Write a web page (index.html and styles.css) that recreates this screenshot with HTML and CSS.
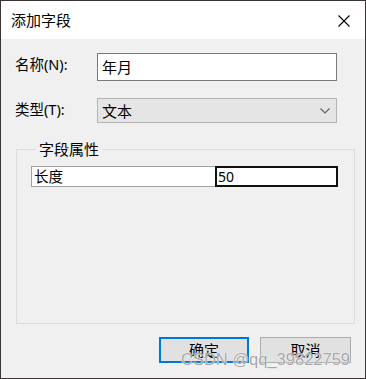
FILE: index.html
```html
<!DOCTYPE html>
<html lang="zh-CN">
<head>
  <meta charset="UTF-8" />
  <meta name="viewport" content="width=device-width, initial-scale=1.0" />
  <title>添加字段</title>
  <link rel="stylesheet" href="styles.css">
</head>
<body>

  <div class="window">
    <!-- Title bar -->
    <div class="titlebar">
      <span class="title">添加字段</span>
      <svg class="close" width="12" height="12" viewBox="0 0 12 12">
        <path d="M0.5 0.5 L11.5 11.5 M11.5 0.5 L0.5 11.5" stroke="#000" stroke-width="1.1" fill="none" />
      </svg>
    </div>

    <div class="content">
      <!-- Name / type rows -->
      <div class="row name-row">
        <label class="label">名称(N):</label>
        <div class="textbox">年月</div>
      </div>
      <div class="row type-row">
        <label class="label">类型(T):</label>
        <div class="combo">
          <span>文本</span>
          <svg class="chevron" width="10" height="6" viewBox="0 0 10 6">
            <path d="M0.5 0.5 L5 5 L9.5 0.5" stroke="#606060" stroke-width="1.1" fill="none" />
          </svg>
        </div>
      </div>

      <!-- Field properties -->
      <fieldset class="group">
        <legend>字段属性</legend>
        <div class="grid-row">
          <div class="cell cell-name">长度</div>
          <div class="cell cell-value">50</div>
        </div>
      </fieldset>

      <div class="buttons">
        <button class="btn btn-default">确定</button>
        <button class="btn">取消</button>
      </div>
    </div>

    <div class="watermark">CSDN @qq_39822759</div>
  </div>

</body>
</html>
```

FILE: styles.css
```css
body {
  margin: 0;
  padding: 0;
  background: #3a2a2a;
  font-family: "Noto Sans", "Noto Sans CJK SC", sans-serif;
  font-size: 15px;
  color: #000;
}
.window {
  position: relative;
  width: 364px;
  height: 377px;
  border: 1px solid #3b3434;
  background: #f0f0f0;
  display: flex;
  flex-direction: column;
}
.titlebar {
  height: 38px;
  background: #fff;
  display: flex;
  align-items: center;
  justify-content: space-between;
  padding: 0 15px 0 10px;
}
.title {
  font-size: 15px;
  line-height: 20px;
  margin-top: -1px;
}
.close {
  margin-top: 1px;
}
.content {
  padding: 14px 0 0 14px;
}
.row {
  display: flex;
  align-items: center;
}
.label {
  width: 82px;
  line-height: 20px;
  font-size: 14.5px;
}
.name-row .label {
  align-self: flex-start;
  margin-top: 1px;
}
.type-row {
  margin-top: 17px;
}
.type-row .label {
  margin-top: -3px;
}
.textbox {
  width: 238px;
  height: 26px;
  border: 1px solid #7a7a7a;
  background: #fff;
  line-height: 26px;
  text-indent: 4px;
  box-sizing: content-box;
}
.combo {
  width: 228px;
  height: 23px;
  border: 1px solid #b4b4b4;
  background: #e5e5e5;
  display: flex;
  align-items: center;
  justify-content: space-between;
  padding: 0 6px 0 4px;
  box-sizing: content-box;
}
.chevron {
  margin-top: 1px;
}
.group {
  margin: 17px 0 0 1px;
  width: 339px;
  height: 184px;
  box-sizing: border-box;
  border: 1px solid #dcdcdc;
  padding: 8px 15px 0 14px;
}
.group legend {
  padding: 0 3px;
  margin-left: 5px;
  line-height: 18px;
  font-size: 15px;
}
.grid-row {
  display: flex;
  height: 21px;
}
.cell {
  box-sizing: border-box;
  background: #fff;
  line-height: 19px;
  font-size: 14.5px;
}
.cell-name {
  width: 184px;
  border: 1px solid #a0a0a0;
  border-right: none;
  padding-left: 2px;
}
.cell-value {
  width: 123px;
  border: 2px solid #111;
  line-height: 17px;
  padding-left: 1px;
  font-size: 14px;
}
.buttons {
  display: flex;
  justify-content: flex-end;
  gap: 11px;
  margin-top: 13px;
  padding-right: 14px;
}
.btn {
  height: 26px;
  width: 91px;
  background: #e1e1e1;
  border: 1px solid #adadad;
  font-family: inherit;
  font-size: 15px;
  padding: 0;
  line-height: 22px;
}
.btn-default {
  width: 90px;
  border: 2px solid #0078d7;
}
.watermark {
  position: absolute;
  left: 180px;
  top: 349px;
  font-family: "Liberation Sans", Arial, sans-serif;
  font-size: 16.5px;
  color: rgba(125, 125, 125, 0.7);
  text-shadow: 0 0 1px #fff, 0 0 1px #fff;
}
```
